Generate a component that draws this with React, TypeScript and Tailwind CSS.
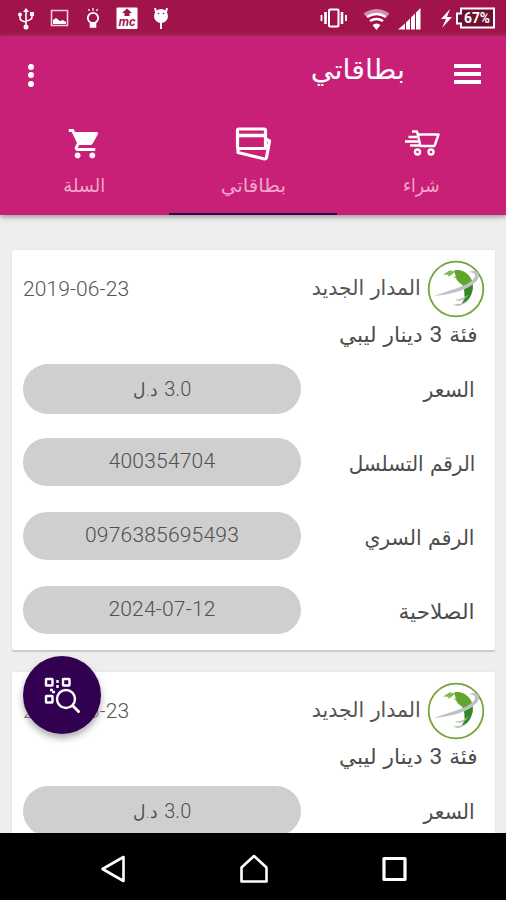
import React from "react";

const rows = [
  { label: "الرقم التسلسل", value: "400354704", scale: "scale-x-[0.95]" },
  { label: "الرقم السري", value: "0976385695493", scale: "scale-x-[0.97]" },
  { label: "الصلاحية", value: "2024-07-12", scale: "scale-x-[1.035]" },
];

function ProviderLogo() {
  return (
    <svg className="h-[58px] w-[58px] shrink-0" viewBox="0 0 58 58">
      <circle cx="29" cy="29" r="27.3" fill="#fff" stroke="#74a43c" strokeWidth="1.8" />
      <path d="M27 10.500c6-1.500 12 1 16 6.500 3 4 3.500 9 2.500 14l-8 5c0-4 .5-6-1.500-10-2-3-6-4-7-8-.5-3-1-4-2-7.500z" fill="#62a52c" />
      <path d="M37 29l8.500-4c.5 8-2 14-8.500 18.500-2 .5-3 0-1.500-1.500 3-4 2.500-8 1.500-13z" fill="#338828" />
      <path d="M18 14l5-3 4 1-3 2.500zM21 16l3-1M27 17l3 1" fill="#82b94f" stroke="#82b94f" strokeWidth="1.200" />
      <path d="M7 36C22 30 40 27 46.500 19c3.500-4.500 1-6.500-4.500-7 8-3 13 2 8 8.500C42 30 24 34.500 7 36z" fill="#bfc1c4" />
      <path d="M28 39.500c5 0 10-2 14-5-4 5-9 8-14 5zM26 44.500c5 0 10-1 13-4-3 5-8 7-13 4z" fill="#b3c2b0" />
    </svg>
  );
}

function Field({ label, value, scale, first = false }: { label: string; value: string; scale: string; first?: boolean }) {
  return (
    <div className="flex h-[74px] items-start justify-between pl-[11px] pr-5">
      <div className={`flex w-[278px] items-center justify-center rounded-full bg-[#cfcfcf] text-[21px] font-light text-[#505050] ${first ? "h-[50px] pt-px" : "h-12 pb-px"}`}>
        {first ? (
          <span dir="rtl" className="scale-x-[0.95] whitespace-nowrap">
            <span className="font-['Roboto']">{value}</span>{" "}
            <span className="font-['DejaVu_Sans',sans-serif] text-[18px]">د.ل</span>
          </span>
        ) : (
          <span className="font-['Roboto',sans-serif] tracking-[0.2px]">{value}</span>
        )}
      </div>
      <div className="flex h-[53px] items-center justify-end">
        <span dir="rtl" className={`origin-right whitespace-nowrap text-[21px] text-[#4c4c4c] ${scale}`}>{label}</span>
      </div>
    </div>
  );
}

function VoucherCard({ fields }: { fields: typeof rows }) {
  return (
    <section className="h-[400px] shrink-0 rounded-[2px] bg-white pt-[10px] shadow-[0_2px_1px_#c9c9c9,0_0_2px_#ddd]">
      <div className="flex h-[58px] items-center justify-between pl-[11px] pr-[10px]">
        <span className="pt-0.5 font-['Roboto',sans-serif] text-[21px] font-light tracking-[0.1px] text-[#555]">2019-06-23</span>
        <div className="flex items-center gap-[6px]">
          <span dir="rtl" className="origin-right scale-x-[0.975] whitespace-nowrap text-[21px] text-[#555]">المدار الجديد</span>
          <ProviderLogo />
        </div>
      </div>
      <div dir="rtl" className="flex h-[46px] items-center pb-3 pr-[17px]">
        <span className="origin-right scale-x-[1.03] whitespace-nowrap text-[21px] text-[#4c4c4c]">
          فئة <span className="font-['Roboto'] text-[22px]">3</span> دينار ليبي
        </span>
      </div>
      <Field label="السعر" value="3.0" scale="scale-x-[0.97]" first />
      {fields.map((r) => (
        <Field key={r.value} {...r} />
      ))}
    </section>
  );
}

function StatusBar() {
  return (
    <div className="h-9 shrink-0 bg-[#a0144b]">
      <svg className="block h-9 w-full" viewBox="0 0 506 36" fill="none" stroke="#fff" strokeWidth="1.6">
        <path d="M26 9v18M20 14v4q0 3 6 4M32 14v3q0 3-6 4" />
        <path d="M23 12l3-4 3 4z" fill="#fff" stroke="none" />
        <circle cx="26" cy="27" r="2.500" fill="#fff" stroke="none" />
        <circle cx="20" cy="14.500" r="2" fill="#fff" stroke="none" />
        <path d="M30 12h4v4h-4z" fill="#fff" stroke="none" />
        <path d="M51.500 10.500h16v15h-16z" stroke="#f3cbd9" />
        <path d="M53 24v-4l3-2 4 3 3-1 3 2v2z" fill="#fff" stroke="none" />
        <circle cx="93" cy="18" r="5.200" strokeWidth="1.800" />
        <path d="M90.500 23v4h5v-4z" fill="#fff" />
        <path d="M93 8v3M88.500 9l1 2M97.500 9l-1 2" strokeWidth="1.200" />
        <rect x="116.500" y="7.500" width="21" height="21.500" rx="1" fill="#fff" stroke="none" />
        <path d="M127 8.500l5 4.500h-2.500v3h-5v-3h-2.500z" fill="#a0144b" stroke="none" />
        <text x="118.500" y="25.500" textLength="17" lengthAdjust="spacingAndGlyphs" className="font-['Liberation_Sans'] text-[12px] font-bold italic" fill="#a0144b" stroke="none">mc</text>
        <circle cx="161" cy="16" r="7" fill="#fff" stroke="none" />
        <path d="M156 12l-1-4M166 12l1-4M161 22v7" strokeWidth="2" />
        <circle cx="158.500" cy="13.500" r=".8" fill="#a0144b" stroke="none" />
        <circle cx="163.500" cy="13.500" r=".8" fill="#a0144b" stroke="none" />
        <rect x="329" y="9.500" width="9.500" height="17" rx="1" strokeWidth="2" />
        <path d="M325.500 12v12M342 12v12" strokeWidth="2.600" />
        <path d="M321.500 15v6M346 15v6" strokeWidth="1.800" />
        <path d="M363.500 13.500q13-9 26 0l-2.500 3q-10.500-7-21 0z" fill="#d58bab" stroke="none" />
        <path d="M367 17q9.500-6 19 0M370 21q6.500-4 13 0" strokeWidth="2.600" />
        <path d="M372.500 25q4-3 8 0l-4 5z" fill="#fff" stroke="none" />
        <path d="M398 29.500l7-6v6zM406 29.500v-7l4-4v11zM411 29.500v-12l4-4v16zM416 29.500v-17l4.500-4.500v21.500z" fill="#fff" stroke="none" />
        <path d="M450 9l-9 10h5l-4 9 10-11h-5z" fill="#fff" stroke="none" />
        <path d="M461 8.500h33v19h-33v-4h-4v-10h4z" fill="#6d1030" stroke="#fff" strokeWidth="2" />
        <text x="464" y="23.200" textLength="26" lengthAdjust="spacingAndGlyphs" className="font-['Roboto'] text-[14px] font-bold" fill="#fff" stroke="none">67%</text>
      </svg>
    </div>
  );
}

function CartIcon() {
  return (
    <svg className="h-9 w-9" viewBox="-.9 0 24.500 24.500" fill="#fff">
      <path d="M7 18c-1.100 0-1.990.9-1.990 2S5.900 22 7 22s2-.9 2-2-.9-2-2-2zM1 2v2h2l3.600 7.590-1.350 2.450c-.16.28-.25.61-.25.96 0 1.100.9 2 2 2h12v-2H7.420c-.14 0-.25-.11-.25-.25l.03-.12.9-1.630h7.450c.75 0 1.410-.41 1.750-1.030l3.580-6.490A1.003 1.003 0 0020 4H5.210l-.94-2H1zm16 16c-1.100 0-1.990.9-1.990 2s.89 2 1.990 2 2-.9 2-2-.9-2-2-2z" />
    </svg>
  );
}

function CardsIcon() {
  return (
    <svg className="h-9 w-9" viewBox="0 0 36 36" fill="none" stroke="#fff" strokeWidth="3.200" strokeLinejoin="round">
      <rect x="2.500" y="3" width="28" height="19.500" rx="1.500" />
      <path d="M3 9.500h27" strokeWidth="3.600" />
      <path d="M3 21v5.500l26.500 6.500q1.500 0 2-1.500l3-16.500-4-2" />
    </svg>
  );
}

function FastCartIcon() {
  return (
    <svg className="h-9 w-9" viewBox="0 0 36 36" fill="none" stroke="#fff" strokeWidth="2.400" strokeLinejoin="round">
      <path d="M8 5.500h5l3.500 14.500h14.500M13.500 8.500H34.500L30.500 20M4.500 11h8.500M1 15.500h14M6 19.500h10" />
      <circle cx="13.500" cy="26" r="2.500" />
      <circle cx="27" cy="26" r="2.500" />
    </svg>
  );
}

function Tab({ icon, label, scale, active = false }: { icon: React.ReactNode; label: string; scale: string; active?: boolean }) {
  return (
    <div className="flex h-[111px] flex-1 flex-col items-center">
      <div className="mt-[22px] h-9">{icon}</div>
      <div className="mt-[5px] flex h-9 items-center">
        <span dir="rtl" className={`whitespace-nowrap text-[19px] text-[#f3a6cb] ${scale}`}>{label}</span>
      </div>
      <div className={`mt-auto h-[2px] w-full ${active ? "bg-[#310851]" : "bg-[#c82077]"}`} />
    </div>
  );
}

export default function App() {
  return (
    <div className="relative flex h-[900px] w-[506px] flex-col overflow-hidden bg-[#eee] font-['DejaVu_Sans',sans-serif]">
      <StatusBar />
      <header className="z-10 h-[179px] shrink-0 bg-[#c82077] shadow-[0_2px_5px_#999]">
        <div className="flex h-[68px] items-center justify-between pl-[28px] pr-[25px]">
          <div className="mt-2.5 flex flex-col gap-[2.500px]">
            <i className="h-1.5 w-1.5 rounded-full bg-white" />
            <i className="h-1.5 w-1.5 rounded-full bg-white" />
            <i className="h-1.5 w-1.5 rounded-full bg-white" />
          </div>
          <div className="flex items-center gap-[49px]">
            <span dir="rtl" className="origin-right scale-x-[1.06] whitespace-nowrap text-[27px] text-white">بطاقاتي</span>
            <div className="mt-2 flex w-[27px] flex-col gap-1">
              <i className="h-1 bg-white" />
              <i className="h-1 bg-white" />
              <i className="h-1 bg-white" />
            </div>
          </div>
        </div>
        <div className="flex">
          <Tab icon={<CartIcon />} label="السلة" scale="scale-x-[0.94]" />
          <Tab icon={<CardsIcon />} label="بطاقاتي" scale="scale-x-[1.04]" active />
          <Tab icon={<FastCartIcon />} label="شراء" scale="scale-x-[0.9]" />
        </div>
      </header>
      <main className="flex h-[618px] shrink-0 flex-col gap-[22px] overflow-hidden pl-3 pr-[11px] pt-[35px]">
        <VoucherCard fields={rows} />
        <VoucherCard fields={[]} />
      </main>
      <button className="absolute left-[23px] top-[656px] flex h-[78px] w-[78px] items-center justify-center rounded-full bg-[#310050] shadow-[0_4px_7px_#aaa]">
        <svg className="h-9 w-9" viewBox="0 0 36 36" fill="none" stroke="#fff" strokeWidth="2.400">
          <rect x="2" y="2" width="6.500" height="6.500" rx=".5" />
          <rect x="19" y="2" width="6.500" height="6.500" rx=".5" />
          <rect x="2" y="19" width="6.500" height="6.500" rx=".5" />
          <path d="M13.500 3v3M13.500 8v3M6 13h3M8 15h3" />
          <circle cx="22" cy="22" r="9" fill="#310050" />
          <path d="M28.500 28.500l7 7" strokeWidth="2.800" />
        </svg>
      </button>
      <nav className="h-[67px] shrink-0 bg-black">
        <svg className="block h-[67px] w-full" viewBox="0 0 506 67" fill="none" stroke="#fff" strokeWidth="2.600" strokeLinejoin="round">
          <path d="M123.500 24v24l-21-12z" />
          <path d="M241.500 34.500L254 23l12.500 11.500V48.500h-25z" />
          <rect x="384" y="25.500" width="21" height="21" strokeWidth="3.200" />
        </svg>
      </nav>
    </div>
  );
}
